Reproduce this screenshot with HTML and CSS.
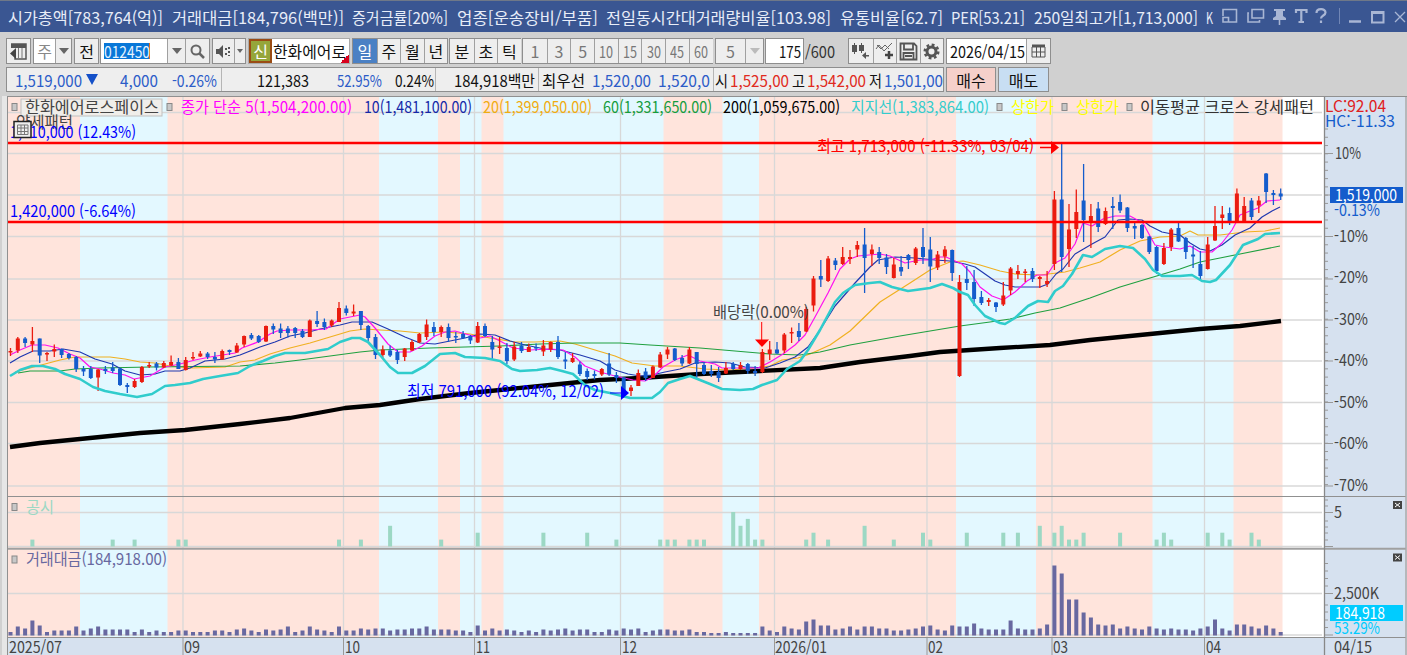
FILE: index.html
```
<!DOCTYPE html>
<html lang="ko">
<head>
    <meta charset="utf-8">
    <title>한화에어로스페이스 차트</title>
    <link rel="stylesheet" href="styles.css">
</head>
<body>
    <div class="window">
        <header class="titlebar">
            <div class="info">
                <span data-w="155">시가총액[783,764(억)]</span>
                <span data-w="172">거래대금[184,796(백만)]</span>
                <span data-w="96">증거금률[20%]</span>
                <span data-w="141">업종[운송장비/부품]</span>
                <span data-w="225">전일동시간대거래량비율[103.98]</span>
                <span data-w="103">유통비율[62.7]</span>
                <span data-w="74">PER[53.21]</span>
                <span data-w="164">250일최고가[1,713,000]</span>
                <span data-w="7">K</span>
            </div>
            <svg class="win-icons" width="190" height="30" viewBox="1217 1 190 30" fill="none" stroke="#a9b6d4" stroke-width="1.6">
                <path d="M1223 16V9.500H1236.500V22H1229"/>
                <path d="M1223 17.500H1228.500V22H1223Z"/>
                <path d="M1252 9.500H1263.500V18H1252ZM1249 13H1248V22H1259.500V20"/>
                <path d="M1274 9H1285V11H1283V16L1286 18V20H1273V18L1276 16V11H1274Z" fill="#a9b6d4" stroke="none"/>
                <path d="M1279.500 20V25"/>
                <path d="M1296 13V10H1306.500V13M1301.300 10V22M1298.500 22H1304" stroke-width="2.200"/>
                <path d="M1316.500 13C1316.500 8 1325.500 8 1325.500 12.500C1325.500 15.500 1321 15.500 1321 18.500M1321 20.500V23" stroke-width="2.200"/>
                <path d="M1339.500 8V24" stroke="#7186b5" stroke-width="1"/>
                <path d="M1349 21.500H1361" stroke-width="2.500"/>
                <path d="M1372 12H1383.500V22.500H1372ZM1372 13H1383.500" stroke-width="2"/>
                <path d="M1395 12L1405 22M1405 12L1395 22" stroke-width="1.300"/>
            </svg>
        </header>

        <div class="toolbar">
            <div class="group"><button class="w25"><svg width="17" height="17" viewBox="0 0 17 17"><path d="M1 1H16V16H5V13" fill="none" stroke="#555" stroke-width="1.500"/><path d="M1 1H16V5H1Z" fill="#555"/><path d="M8.500 5V15M12 5V15" stroke="#777"/><path d="M0 10.500L6 5V16Z" fill="#444"/></svg></button></div>
            <div class="group"><button class="w22 white gray">주</button><button class="w17"><i class="arrow"></i></button></div>
            <div class="group"><button class="w25">전</button></div>
            <div class="group code"><div class="input"><span class="selected" data-w="46">012450</span></div><button class="w18"><i class="arrow"></i></button><button class="w24"><svg width="17" height="17" viewBox="0 0 17 17" fill="none" stroke="#666" stroke-width="2"><circle cx="7" cy="7" r="4.500"/><path d="M10 10L15 15" stroke-width="2.500"/></svg></button></div>
            <div class="group"><button class="w22"><svg width="17" height="15" viewBox="0 0 17 15" fill="#555"><path d="M1 5H4L8 1V14L4 10H1ZM10 4H12V6H10ZM10 9H12V11H10ZM13 3H15V5H13ZM13 7H15V9H13ZM13 11H15V12H13Z"/></svg></button><button class="w12"><i class="arrow small"></i></button></div>
            <div class="group name"><b class="credit">신</b><div class="stock"><span data-w="73">한화에어로</span></div></div>
            <div class="group period"><button class="on">일</button><button>주</button><button>월</button><button>년</button></div>
            <div class="group unit"><button>분</button><button>초</button><button>틱</button></div>
            <div class="group minutes"><button>1</button><button>3</button><button>5</button><button><span data-w="14">10</span></button><button><span data-w="14">15</span></button><button><span data-w="14">30</span></button><button><span data-w="14">45</span></button><button><span data-w="14">60</span></button></div>
            <div class="group off"><button class="w30">5</button><button class="w19"><i class="arrow pale"></i></button></div>
            <div class="group snug"><div class="input count"><span data-w="22">175</span></div></div>
            <div class="total"><span data-w="30">/600</span></div>
            <div class="group tools">
                <button><svg width="20" height="18" viewBox="0 0 20 18" fill="#555"><path d="M1 3H6V10H1ZM3 1H4V12H3ZM8 3H13V9H8ZM10 1H11V11H10Z"/><path d="M18 13H15V10L11 13.500L15 17V14.500H18Z"/></svg></button>
                <button><svg width="20" height="18" viewBox="0 0 20 18" fill="none" stroke="#666"><path d="M1 7L4 3L9 9L13 5L17 1M2 3L6 7L10 3L14 7"/><path d="M14 9V17M10 13H18" stroke="#444" stroke-width="2.500"/></svg></button>
                <button><svg width="19" height="19" viewBox="0 0 19 19" fill="none" stroke="#555" stroke-width="1.800"><path d="M1.500 1.500H15L17.500 4V17.500H1.500ZM5 2V7.500H14V2M4.500 17V11H14.500V17M6 14H13"/></svg></button>
                <button><svg width="19" height="19" viewBox="0 0 19 19" fill="none" stroke="#555"><circle cx="9.500" cy="9.500" r="4.500" stroke-width="3"/><circle cx="9.500" cy="9.500" r="6.800" stroke-width="2.400" stroke-dasharray="2.800 2.540"/></svg></button>
            </div>
            <div class="group"><div class="input date"><span data-w="75">2026/04/15</span></div><button class="w24"><svg width="15" height="14" viewBox="0 0 15 14" fill="none" stroke="#555"><path d="M1 2H14" stroke-width="3"/><path d="M1 3V13H14V3M5.500 3V13M9.500 3V13M1 8H14"/></svg></button></div>
        </div>

        <div class="quote-row">
            <div class="quote blue">
                <div class="cell price"><span data-w="67">1,519,000</span><i class="down"></i><span data-w="38">4,000</span><span class="rate" data-w="45">-0.26%</span></div>
                <div class="cell volume"><span class="black shares" data-w="52">121,383</span><span data-w="45">52.95%</span><span class="black" data-w="39">0.24%</span></div>
                <div class="cell amount black"><span data-w="81">184,918백만</span></div>
                <div class="cell best"><span class="black" data-w="43">최우선</span><span data-w="59">1,520,00</span><span data-w="52">1,520,0</span></div>
                <div class="cell ohl"><span class="black" data-w="13">시</span><span class="red" data-w="59">1,525,00</span><span class="black" data-w="13">고</span><span class="red" data-w="59">1,542,00</span><span class="black" data-w="13">저</span><span data-w="59">1,501,00</span></div>
            </div>
            <button class="buy">매수</button>
            <button class="sell">매도</button>
        </div>

        <main>
            <svg id="chart" width="1407" height="560" viewBox="0 95 1407 560"></svg>
        </main>
    </div>
    <script src="chart.js"></script>
</body>
</html>
```
FILE: styles.css
```
* {
    box-sizing: border-box;
}
body {
    margin: 0;
    overflow: hidden;
    font-family: "Noto Sans CJK KR", sans-serif;
    font-size: 16px;
    color: #111;
    background: #d0d0d0;
}
.window {
    width: 1407px;
    height: 655px;
}
.titlebar {
    display: flex;
    justify-content: space-between;
    height: 32px;
    padding-left: 8px;
    border-top: 1px solid #6f7888;
    background: #3a5692;
    color: #e8edf8;
}
.info {
    display: flex;
    align-items: center;
    gap: 8.500px;
}
[data-w] {
    display: block;
    flex: none;
    white-space: nowrap;
    line-height: 20px;
    text-align: left;
}
[data-w] > span {
    display: inline-block;
    transform-origin: left center;
}
.win-icons {
    flex: none;
}

/* toolbar */
.toolbar {
    display: flex;
    height: 32px;
    padding: 6px 0 0 6px;
    gap: 2px;
}
.group {
    display: flex;
    flex: none;
    height: 26px;
    border: 1px solid #8e8e8e;
    background: #eee;
}
button {
    display: flex;
    flex: none;
    align-items: center;
    justify-content: center;
    height: 100%;
    width: 24px;
    margin: 0;
    padding: 0;
    border: 0;
    background: #eee;
    color: #111;
    font: inherit;
    line-height: 20px;
}
button + button,
.input + button {
    border-left: 1px solid #a0a0a0;
}
.w12 { width: 11px; }
.w17 { width: 16px; }
.w18 { width: 18px; }
.w22 { width: 21px; }
.w24 { width: 24px; }
.w25 { width: 23px; }
.white {
    background: #fff;
}
.gray {
    color: #888;
}
.arrow {
    border: 5px solid transparent;
    border-top: 6px solid #666;
    border-bottom: 0;
}
.arrow.small {
    border-width: 4px 3px 0;
}
.arrow.pale {
    border-top-color: #bbb;
}
.input {
    display: flex;
    align-items: center;
    background: #fff;
}
.code,
.unit,
.minutes,
.snug {
    margin-left: -1px;
}
.code .input {
    width: 66px;
    padding-left: 3px;
}
.selected {
    height: 16px;
    line-height: 16px;
    background: #0877d8;
    color: #e6f3ff;
    border-right: 1px solid #e07020;
}
.name {
    border-color: #aaa;
    background: #fff;
    width: 102px;
}
.credit {
    display: flex;
    align-items: center;
    justify-content: center;
    width: 23px;
    border: 2px solid #9a4c14;
    background: #95a63a;
    color: #fff;
    font-weight: normal;
}
.stock {
    width: 77px;
    padding: 2px 0 0 1px;
    background: linear-gradient(135deg, transparent 50%, #d8001c 50%) right bottom / 9px 9px no-repeat;
}
.period {
    width: 96px;
}
.period button,
.unit button {
    width: 23.500px;
}
.period .on {
    background: #4a80c4;
    color: #fff;
}
.unit {
    width: 72px;
}
.minutes {
    width: 191px;
}
.minutes button,
.off button {
    width: 23.700px;
    color: #777;
}
.off .w30 { width: 29px; }
.off .w19 { width: 18px; }
.count {
    width: 37px;
    justify-content: flex-end;
    padding-right: 2px;
}
.total {
    display: flex;
    align-items: center;
    height: 26px;
    width: 41px;
    margin-left: -1px;
    color: #333;
}
.tools button {
    width: 23.500px;
}
.date {
    width: 79px;
    padding-left: 3px;
}

/* quote line */
.quote-row {
    display: flex;
    gap: 2px;
    height: 31px;
    padding: 3px 0 3px 6px;
}
.quote {
    display: flex;
    width: 938px;
    border: 1px solid #8e8e8e;
    background: #eee;
}
.cell {
    display: flex;
    align-items: center;
    border-right: 1px solid #b5b5b5;
}
.cell:last-child {
    border: 0;
}
.blue { color: #2c5cc8; }
.red { color: #e02a20; }
.black { color: #111; }
.price {
    width: 215px;
    padding-left: 8px;
}
.down {
    margin: 0 22px 0 4px;
    border: 6.500px solid transparent;
    border-top: 11px solid #1450c8;
    border-bottom: 0;
}
.rate {
    margin-left: 14px;
}
.volume {
    width: 214px;
    padding-left: 35px;
    gap: 13px;
}
.shares {
    margin-right: 15px;
}
.amount {
    width: 103px;
    padding-left: 18px;
}
.best {
    width: 175px;
    padding-left: 3px;
    gap: 7px;
}
.ohl {
    padding-left: 1px;
    gap: 2.500px;
}
.buy,
.sell {
    width: 50px;
    border: 1px solid #8e8e8e;
}
.buy {
    background: #f5d0ca;
}
.quote-row .sell {
    width: 51px;
    border-left: 1px solid #8e8e8e;
    background: #c8def3;
}

/* chart */
main {
    height: 560px;
}
#chart {
    display: block;
}
#chart text {
    font-size: 16px;
}
```
FILE: chart.js
```
// squeeze labels to their column width
document.querySelectorAll('[data-w]').forEach(el => {
    const inner = document.createElement('span');
    inner.textContent = el.textContent;
    el.textContent = '';
    el.appendChild(inner);
    const w = Number(el.dataset.w);
    const natural = inner.getBoundingClientRect().width;
    el.style.width = w + 'px';
    inner.style.transform = `scaleX(${w / natural})`;
});

const STEP = 7.3;
const X0 = 10.5;
const barX = i => X0 + i * STEP;
let out = '';

const rect = (x, y, w, h, fill, extra = '') => {
    out += `<rect x="${x}" y="${y}" width="${w}" height="${h}" fill="${fill}" ${extra}/>`;
};
const line = (x1, y1, x2, y2, color, w = 1) => {
    out += `<line x1="${x1}" y1="${y1}" x2="${x2}" y2="${y2}" stroke="${color}" stroke-width="${w}"/>`;
};
const text = (x, y, w, str, color) => {
    out += `<text x="${x}" y="${y}" textLength="${w}" lengthAdjust="spacingAndGlyphs" fill="${color}">${str}</text>`;
};
const poly = (pts, color, w) => {
    out += `<polyline points="${pts}" fill="none" stroke="${color}" stroke-width="${w}" stroke-linejoin="round"/>`;
};

// color, high, body top, body bottom, low
const candles = `r 348 351 352.5 356|r 337 338.5 350.5 353|b 337 338.5 343 347|r 327 341 344.5 352|b 338.5 338.5 355.5 363
r 352 353 354.5 361|r 344.5 349 351.5 357|b 348.5 349 355 358|b 353 354 358 359.5|b 356 357 369 372
b 366 369 371.5 376|b 366 369 378 379|r 369 369.5 377.5 391|b 366 369 371 374|b 362 367.5 371 373
b 368 368.5 385 386|b 383 385 387 393|r 379 381 387 388|r 366 367 382 383|r 362 365 366 368
b 362 363.5 367.5 370.5|r 361 363 367.5 368|r 355.5 362 365.5 366|b 358 362 369 369|r 357 360 370 370.5
r 352 357 358.5 360|r 351 353.5 356.5 357|b 352 353.5 357 359|b 352 357 359.5 363|r 349.5 351 359.5 360
b 349.5 350 352 355|r 343 345.5 352.5 353|r 335.5 336 344.5 347|b 333 335 338.5 340|b 335 336 342 343
r 325.5 326 341.5 342|b 323.5 326 329.5 334|b 323.5 328.5 333 338|b 326 328.5 333 337.5|b 327 328 333 338
b 329 331 337 338|r 319.5 320.5 337 337|b 311 321 324 327|b 318.5 322 327 330|r 319.5 320.5 325.5 327
r 302 308 322 322|b 305.5 308.5 313 315.5|r 304.5 311.5 313.5 316|b 311 311 325 330|b 325 326 338 341
b 334 337 355 359|r 345.5 349.5 355 359|b 345.5 350.5 355.5 357|b 350 352 360 364|r 348 348.5 357 361
r 340 342 350.5 351|r 333 334 342.5 343|r 319.5 324.5 337 340|b 322 327 332 336|r 325.5 327 332 337
b 323.5 327 338 342|b 332 336 337 343|b 331 334 338 339|b 335 336 340.5 344|r 322 326 342.5 343
b 323.5 326 336 337|b 336 342 349.5 360|r 337 346.5 347.5 354|b 343 348 361 364|r 342 346.5 359.5 361
b 342 345.5 351 353|r 343.5 347 352 352|b 343.5 347 348 351|r 340 345.5 351.5 356|r 341.5 342 349.5 352
b 336 342 357 359|b 352 359.5 361.5 369|r 353 358 362 363|b 361.5 364.5 374 376|b 368.5 371 377 380
b 370.5 374 376 379.5|r 368 369 374.5 376|b 353 363.5 374.5 376|b 372 375 378 383|b 377 377.5 395 398
r 385 387.5 391 396|r 369.5 373 386 386|b 368 371.5 378 381|r 365.5 366.5 378 378|r 352 354.5 367.5 368
r 347 349.5 354.5 359|b 348 348.5 360 361|b 355 358 363.5 366|r 347 349.5 363.5 364|b 352 352 364 379
b 362 365 374 375|b 365 371 374 377|b 367 372 378 382|r 362 368 373.5 374|b 362 364 369 370
r 362 365 369 370|b 363 364 371 374|b 366 371 373 376|r 349 352 372 373|r 341 349.5 354 360
b 342 349.5 353.5 354|r 333 334.5 350.5 353|r 327.5 332 333.5 343|b 323 331 337 341|r 307 309 331.5 332
r 276 278.5 305.5 311.5|b 260 276 279.5 287|r 256 258.5 281 282|b 258 260.5 265 270|r 247 257 264 265
r 250 257 259 264|r 241 245 249.5 257|b 228 244.5 258 293|r 244.5 249.5 254 266|b 247 252 258 264
b 254 257.5 267 274|r 258 264.5 278 278.5|b 256 267 271.5 276|b 254 255 260 269|r 247 248.5 263 265
b 228 247 257 264|b 237 249.5 266.5 282|r 251 254.5 267.5 270|r 246 249.5 256.5 263|b 249.5 250 273 281
r 275 282 376 377|b 266 279 283 290|b 270 282 299 306|b 291 297 303 305|r 298 300 302 306
b 302 302.5 307 312|r 282 295.5 304.5 306|r 267 268.5 290.5 295|r 265 271 274 279|r 269 271.5 273 282
b 268 271 279 282|r 276 277 279 288|r 271 281 284 287|r 191 199.5 264 270|b 143 199.5 257 272
r 204 229.5 249 267|r 189.5 212 229 238|b 164 200.5 220 242|r 204 216 222 248|b 202 208.5 227 232
r 207.5 211 224 225|b 197 206 208 229|b 194.5 202 210.5 213|b 207 207.5 228 232|b 222 226 228.5 239
b 224 225 238 239|b 236 236.5 252 254|b 246 247 271 274|r 243 248 264 265|r 228 229.5 247 251
b 223 228 241.5 242|b 237 238 252 259|b 246 254.5 256.5 268|b 251 264 276 280|r 237 244.5 269 269.5
r 206 226 240.5 241|r 206 214.5 218 229|b 207.5 213 221 225|r 188.5 193.5 222 223|r 197 206 221 222
b 198 200.5 217 220|r 196 200.5 205.5 213|b 173 173.5 192 203|b 190 193 195 205|b 188.5 193.5 196.5 200`
    .split(/[|\n]/).map(s => s.split(' '));

const volumes = [3.5,9,7,15,10,3.5,5,5,5,9,5,7,9,6,6,6,6,3.5,6,3.5,5,3.5,3.5,5,5,3.5,3.5,3.5,5,5,3.5,6,7,5,3.5,6,5,6,9,3.5,5,9,6,5,3.5,9,5,5,7,6,7,7,5,6,6,7,7,9,6,6,6,5,5,3.5,10,5,7,5,6,5,3.5,5,3.5,6,5,6,7,5,6,6,3.5,3.5,6,5,7,6,7,3.5,5,6,6,5,5,6,3.5,3.5,2.5,2.5,3.5,2.5,2.5,2.5,2.5,9,5,3.5,9,7,6,14,16,10,10,6,7,9,6,9,9,7,7,5,5,6,7,9,10,6,5,10,9,9,12,7,6,6,6,15,7,6,6,7,11,70,62,36,36,23,18,11,10,11,7,9,7,6,9,7,6,7,6,6,5,7,9,16,7,5,11,11,9,7,10,7,3.5];

// bar index, number of filings
const filings = [[3,1],[14,1],[17,1],[23,1],[24,1],[45,1],[48,1],[52,3],[59,1],[64,2],[73,2],[79,2],[83,1],[89,1],[90,1],[91,1],[93,1],[94,1],[95,1],[99,5],[100,3],[101,4],[102,1],[103,1],[109,1],[110,2],[112,1],[117,3],[121,1],[125,2],[126,1],[131,2],[136,2],[138,2],[141,3],[143,2],[144,3],[145,1],[146,1],[147,2],[152,2],[157,1],[158,2],[159,1],[164,2],[166,2],[167,1],[170,2],[171,1]];

const ma5 = '10,355 20,350 32,345 45,345 58,348 70,354 80,358 90,367 100,369 113,373 125,375 134,379 150,376 165,367 180,364 195,360 210,357 235,353 242,348 258,342 270,334 277,331 290,330 310,330 326,329 340,319 350,317 360,315 365,317 375,328 388,344 398,352 410,352 422,346 435,336 445,332 455,331 462,333 480,338 490,336 500,341 513,348 530,350 550,349 563,350 575,357 585,366 600,372 615,376 633,380 645,381 653,377 663,367 675,360 688,355 700,361 715,364 722,368 735,368 758,368 770,362 783,354 795,345 805,335 815,317 828,293 840,269 850,259 858,256 880,254 890,256 905,263 920,260 930,260 940,257 946,257 955,261 962,264 970,272 980,287 992,296 1003,300 1015,292 1027,281 1037,275 1047,275 1055,263 1065,258 1075,244 1083,223 1092,226 1103,219 1115,216 1130,216 1143,223 1150,236 1155,245 1165,247 1180,249 1190,246 1200,252 1212,252 1222,243 1232,230 1240,215 1250,211 1258,208 1267,201 1280,200';
const ma10 = '10,363 20,357 33,351 50,351 63,349 80,352 95,359 112,364 125,371 140,375 155,374 165,371 180,371 190,368 205,361 225,359 240,355 260,347 275,342 290,336 305,333 320,329 340,325 352,322 372,322 388,329 405,337 420,343 435,344 450,341 465,338 480,334 495,335 510,341 525,345 545,349 560,350 580,355 600,361 615,370 628,374 640,376 652,375 665,372 680,369 695,363 715,362 730,363 745,367 765,368 780,363 795,357 808,347 820,330 835,306 855,283 870,267 878,260 895,257 915,258 935,260 950,261 965,264 975,267 985,274 995,281 1005,285 1015,287 1040,287 1048,284 1056,274 1063,269 1075,254 1092,244 1105,237 1118,220 1130,219 1142,220 1150,226 1162,232 1172,234 1180,235 1190,243 1200,249 1210,251 1222,245 1235,235 1250,228 1262,217 1272,211 1280,207';
const ma20 = '15,372 30,368 45,364 60,360 75,357 110,357 125,359 140,362 155,363 170,366 190,368 225,367 240,362 255,360 270,354 290,348 310,343 330,337 350,331 365,329 380,330 400,331 420,333 445,332 470,334 490,338 515,342 535,342 560,341 575,344 595,350 615,356 632,363 655,366 680,366 705,369 730,370 755,368 770,366 782,360 798,358 810,354 830,345 850,331 880,302 910,283 930,270 950,262 963,261 980,265 1000,271 1015,274 1040,275 1065,272 1080,268 1100,262 1120,250 1140,241 1160,237 1180,236 1190,231 1198,235 1220,235 1245,232 1265,231 1280,228';
const ma60 = '18,373 30,371 60,371 75,369 100,368 150,367 240,366 275,363 300,360 330,356 360,352 380,350 430,348 500,346 540,344 575,343 620,343 650,345 700,348 735,351 770,354 800,355 820,352 850,345 900,336 930,331 960,326 990,322 1010,319 1035,313 1060,308 1090,298 1120,287 1150,278 1180,269 1200,262 1220,258 1240,254 1280,246';
const ma200 = '10,447 40,443 80,439 140,433 185,430 240,424 290,418 345,408 380,405 420,399 470,393 540,386 600,380 640,378 700,374 760,371 820,368 860,362 910,356 940,352 1000,348 1050,345 1090,340 1160,333 1200,329 1240,326 1281,321';
const support = '10,376 20,370 32,366 43,366 55,369 65,374 80,379 93,387 105,391 120,394 137,397 152,394 165,386 175,385 190,383 203,379 220,376 238,373 250,366 263,361 275,356 285,353 305,353 328,349 340,342 352,338 360,338 368,342 380,355 390,367 398,373 412,373 425,366 440,354 455,353 465,357 485,358 500,361 512,369 520,371 537,370 550,368 562,371 573,374 585,385 595,390 610,393 630,398 652,398 660,392 668,383 680,379 690,376 700,380 710,384 722,389 740,390 753,389 762,385 777,380 787,369 800,361 808,350 820,330 835,302 843,293 855,285 870,283 880,282 892,287 908,291 930,288 942,284 953,288 960,292 968,295 975,305 985,316 1000,323 1005,324 1015,318 1028,306 1038,301 1048,302 1055,291 1063,286 1072,274 1083,255 1092,257 1105,249 1120,246 1133,248 1145,259 1153,270 1162,276 1180,276 1192,275 1202,281 1210,282 1216,280 1230,265 1243,245 1258,239 1265,234 1280,233';

// frame and background zones
rect(2, 96, 5, 559, '#e6e6e6');
rect(7, 96, 1400, 559, '#fff');
rect(8, 97, 1274.5, 541, '#ffe4dc');
[[80, 167.5], [379, 438], [460, 481.5], [503.5, 663.5], [722.5, 759], [956, 1036], [1152.5, 1233.5]]
    .forEach(([a, b]) => rect(a, 97, b - a, 541, '#e3f8ff'));
rect(1325, 97, 82, 558, '#d6e1ef');
rect(8, 638, 1399, 17, '#d6e1ef');

// grid
[183, 343.5, 474.5, 620.5, 774.5, 927, 1052, 1204.5].forEach(x => {
    line(x, 97, x, 637, '#d8d8d8', 1.3);
    line(x, 638, x, 655, '#999');
});
[112.5, 153.5, 195, 236.5, 279, 320, 361, 402.5, 443.5, 486, 512.5, 546.5, 593.5, 635]
    .forEach(y => line(8, y, 1322, y, '#d8d8d8', 1.3));

// legend
const mark = (x, y) => rect(x, y, 5, 7, '#c8c8c8', 'stroke="#888"');
rect(21, 99, 141, 17, '#f0eeea', 'stroke="#c0c0c0"');
[12, 167, 997, 1062, 1127].forEach(x => mark(x, 103.5));
text(25, 113, 134, '한화에어로스페이스', '#444');
text(181, 113, 171, '종가 단순 5(1,504,200.00)', '#f0f');
text(364, 113, 108, '10(1,481,100.00)', '#1428a8');
text(483, 113, 109, '20(1,399,050.00)', '#f0ac10');
text(603, 113, 109, '60(1,331,650.00)', '#149c3c');
text(723, 113, 117, '200(1,059,675.00)', '#000');
text(851, 113, 138, '지지선(1,383,864.00)', '#34cccc');
text(1011, 113, 43, '상한가', '#ff0');
text(1076, 113, 43, '상한가', '#ff0');
text(1140, 113, 174, '이동평균 크로스 강세패턴', '#333');
text(16, 128, 57, '약세패턴', '#444');
text(10, 138, 126, '1,710,000 (12.43%)', '#00f');
text(10, 217, 126, '1,420,000 (-6.64%)', '#00f');
rect(14, 121.5, 17, 16, '#eee', 'stroke="#222" stroke-width="1.5"');
out += '<path d="M17.5 125H28V134.500H17.500ZM17.500 128H28M17.500 131.500H28M21 125V134.500M24.500 125V134.500" fill="none" stroke="#777"/>';

// moving averages, candles
poly(ma20, '#f0b020', 1.2);
poly(ma60, '#20a040', 1.2);
poly(ma200, '#000', 4.3);
poly(ma10, '#2038b0', 1.2);
poly(ma5, '#ff10f0', 1.2);
candles.forEach(([c, high, top, bottom, low], i) => {
    const color = c === 'r' ? '#ea1c10' : '#145ccc';
    line(barX(i), high, barX(i), low, color, 1.3);
    rect(barX(i) - 2, top, 4, Math.max(1.5, bottom - top), color);
});
poly(support, '#30cccc', 2.6);
line(8, 143, 1322, 143, '#f00', 2.3);
line(8, 222, 1322, 222, '#f00', 2.3);

// annotations
text(407, 397, 197, '최저 791,000 (92.04%, 12/02)', '#00f');
out += '<path d="M610 393H622" stroke="#00f"/><path d="M621 386L629 393L621 400Z" fill="#00f"/>';
text(817, 152, 217, '최고 1,713,000 (-11.33%, 03/04)', '#f00');
out += '<path d="M1040 147.500H1053" stroke="#f00" stroke-width="1.5"/><path d="M1051 141L1059 147.500L1051 154Z" fill="#f00"/>';
text(713, 318, 96, '배당락(0.00%)', '#444');
out += '<path d="M761.700 322V341" stroke="#f00"/><path d="M755 339.500H769L762 347Z" fill="#f00"/>';

// filings and traded value
filings.forEach(([i, n]) => rect(barX(i) - 2, 546.5 - n * 6.9, 4, n * 6.9, '#9cd8c4'));
volumes.forEach((v, i) => rect(barX(i) - 2, 635.5 - v, 4, v, '#6868a0'));
mark(12, 503.5);
text(26, 513, 28, '공시', '#9cd8c4');
mark(12, 556);
text(26, 565, 141, '거래대금(184,918.00)', '#6868a0');

// borders
line(7, 96.5, 1407, 96.5, '#909090');
line(7.5, 96, 7.5, 655, '#909090');
line(8, 496.5, 1406, 496.5, '#909090');
line(8, 548.7, 1406, 548.7, '#a0a0a0', 2);
line(8, 637.5, 1406, 637.5, '#909090');
line(1324.5, 97, 1324.5, 655, '#888', 1.3);
line(1406, 97, 1406, 655, '#aaa', 1.5);

// value axis
for (let y = 129; y < 492; y += 8.27) line(1325, y, 1328, y, '#999');
[153.5, 195, 236.5, 279, 320, 361, 402.5, 443.5, 486, 512.5, 546.5, 593.5, 635]
    .forEach(y => line(1325, y, 1333, y, '#999'));
[500, 506, 521, 527, 533, 540, 563.5, 571, 578.5, 586, 605, 612, 620, 627.5]
    .forEach(y => line(1325, y, 1328, y, '#999'));
text(1325, 112, 61, 'LC:92.04', '#e02020');
text(1325, 127, 70, 'HC:-11.33', '#145ccc');
text(1335, 159, 26, '10%', '#444');
['-10%', '-20%', '-30%', '-40%', '-50%', '-60%', '-70%']
    .forEach((s, i) => text(1334, 241.5 + i * 41.5, 34, s, '#444'));
rect(1330, 187, 73, 16, '#145ccc');
text(1335, 201, 62, '1,519,000', '#fff');
text(1334, 216, 46, '-0.13%', '#145ccc');
text(1334, 518, 8, '5', '#444');
text(1334, 599, 45, '2,500K', '#444');
rect(1330, 605, 73, 16, '#00ccff');
text(1335, 618.5, 50, '184,918', '#fff');
text(1334, 634, 46, '53.29%', '#00ccff');
[501, 553.5].forEach(y => {
    rect(1393, y, 9, 8, '#444');
    out += `<path d="M1395 ${y + 2}l5 4m0 -4l-5 4" stroke="#fff"/>`;
});

// time axis
[[9, 53, '2025/07'], [184, 16, '09'], [345, 15, '10'], [476, 14, '11'], [622, 15, '12'], [775, 52, '2026/01'],
 [928, 15, '02'], [1053, 15, '03'], [1206, 15, '04'], [1334, 38, '04/15']]
    .forEach(([x, w, s]) => text(x, 653, w, s, '#444'));

document.getElementById('chart').innerHTML = out;
```
